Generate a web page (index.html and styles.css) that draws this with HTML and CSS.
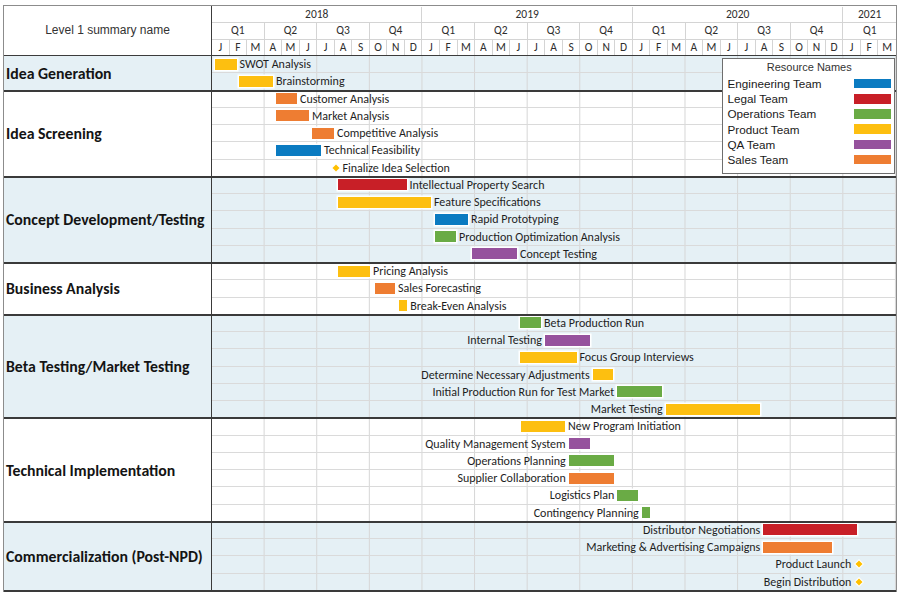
FILE: index.html
```html
<!DOCTYPE html>
<html>
<head>
<meta charset="utf-8">
<title>Gantt</title>
<link rel="stylesheet" href="styles.css">
</head>
<body>
<div class="chart">
  <div class="head">
    <div class="head-title">Level 1 summary name</div>
    <div class="scale">
      <div class="scale-row years">
        <div class="c y12">2018</div><div class="c y12">2019</div><div class="c y12">2020</div><div class="c y3">2021</div>
      </div>
      <div class="scale-row quarters">
        <div class="c q">Q1</div><div class="c q">Q2</div><div class="c q">Q3</div><div class="c q">Q4</div>
        <div class="c q">Q1</div><div class="c q">Q2</div><div class="c q">Q3</div><div class="c q">Q4</div>
        <div class="c q">Q1</div><div class="c q">Q2</div><div class="c q">Q3</div><div class="c q">Q4</div>
        <div class="c q">Q1</div>
      </div>
      <div class="scale-row months">
        <div class="c">J</div><div class="c">F</div><div class="c">M</div><div class="c">A</div><div class="c">M</div><div class="c">J</div><div class="c">J</div><div class="c">A</div><div class="c">S</div><div class="c">O</div><div class="c">N</div><div class="c">D</div>
        <div class="c">J</div><div class="c">F</div><div class="c">M</div><div class="c">A</div><div class="c">M</div><div class="c">J</div><div class="c">J</div><div class="c">A</div><div class="c">S</div><div class="c">O</div><div class="c">N</div><div class="c">D</div>
        <div class="c">J</div><div class="c">F</div><div class="c">M</div><div class="c">A</div><div class="c">M</div><div class="c">J</div><div class="c">J</div><div class="c">A</div><div class="c">S</div><div class="c">O</div><div class="c">N</div><div class="c">D</div>
        <div class="c">J</div><div class="c">F</div><div class="c">M</div>
      </div>
    </div>
  </div>

  <div class="section shade">
    <div class="sec-label">Idea Generation</div>
    <div class="rows">
      <div class="row"><span class="bar product" style="left:2.5px;width:22px"><span class="lbl r">SWOT Analysis</span></span></div>
      <div class="row"><span class="bar product" style="left:27px;width:34px"><span class="lbl r">Brainstorming</span></span></div>
    </div>
  </div>

  <div class="section">
    <div class="sec-label">Idea Screening</div>
    <div class="rows">
      <div class="row"><span class="bar sales" style="left:64px;width:21px"><span class="lbl r">Customer Analysis</span></span></div>
      <div class="row"><span class="bar sales" style="left:64px;width:33px"><span class="lbl r">Market Analysis</span></span></div>
      <div class="row"><span class="bar sales" style="left:100px;width:22px"><span class="lbl r">Competitive Analysis</span></span></div>
      <div class="row"><span class="bar eng" style="left:64px;width:45px"><span class="lbl r">Technical Feasibility</span></span></div>
      <div class="row"><span class="mile" style="left:123.5px"><span class="dia"></span><span class="lbl r">Finalize Idea Selection</span></span></div>
    </div>
  </div>

  <div class="section shade">
    <div class="sec-label">Concept Development/Testing</div>
    <div class="rows">
      <div class="row"><span class="bar legal" style="left:126px;width:68.5px"><span class="lbl r">Intellectual Property Search</span></span></div>
      <div class="row"><span class="bar product" style="left:126px;width:93px"><span class="lbl r">Feature Specifications</span></span></div>
      <div class="row"><span class="bar eng" style="left:223px;width:33px"><span class="lbl r">Rapid Prototyping</span></span></div>
      <div class="row"><span class="bar ops" style="left:223px;width:21px"><span class="lbl r">Production Optimization Analysis</span></span></div>
      <div class="row"><span class="bar qa" style="left:260px;width:45px"><span class="lbl r">Concept Testing</span></span></div>
    </div>
  </div>

  <div class="section">
    <div class="sec-label">Business Analysis</div>
    <div class="rows">
      <div class="row"><span class="bar product" style="left:126px;width:32px"><span class="lbl r">Pricing Analysis</span></span></div>
      <div class="row"><span class="bar sales" style="left:163px;width:20px"><span class="lbl r">Sales Forecasting</span></span></div>
      <div class="row"><span class="bar product" style="left:187.3px;width:8px"><span class="lbl r">Break-Even Analysis</span></span></div>
    </div>
  </div>

  <div class="section shade">
    <div class="sec-label">Beta Testing/Market Testing</div>
    <div class="rows">
      <div class="row"><span class="bar ops" style="left:308px;width:21px"><span class="lbl r">Beta Production Run</span></span></div>
      <div class="row"><span class="bar qa" style="left:333px;width:44.5px"><span class="lbl l">Internal Testing</span></span></div>
      <div class="row"><span class="bar product" style="left:308px;width:56.5px"><span class="lbl r">Focus Group Interviews</span></span></div>
      <div class="row"><span class="bar product" style="left:380.7px;width:20.5px"><span class="lbl l">Determine Necessary Adjustments</span></span></div>
      <div class="row"><span class="bar ops" style="left:405.3px;width:45px"><span class="lbl l">Initial Production Run for Test Market</span></span></div>
      <div class="row"><span class="bar product" style="left:453.7px;width:94.3px"><span class="lbl l">Market Testing</span></span></div>
    </div>
  </div>

  <div class="section">
    <div class="sec-label">Technical Implementation</div>
    <div class="rows">
      <div class="row"><span class="bar product" style="left:308.5px;width:44.5px"><span class="lbl r">New Program Initiation</span></span></div>
      <div class="row"><span class="bar qa" style="left:356.7px;width:21px"><span class="lbl l">Quality Management System</span></span></div>
      <div class="row"><span class="bar ops" style="left:356.7px;width:45px"><span class="lbl l">Operations Planning</span></span></div>
      <div class="row"><span class="bar sales" style="left:356.7px;width:45px"><span class="lbl l">Supplier Collaboration</span></span></div>
      <div class="row"><span class="bar ops" style="left:405.3px;width:20.7px"><span class="lbl l">Logistics Plan</span></span></div>
      <div class="row"><span class="bar ops" style="left:429.7px;width:8.3px"><span class="lbl l">Contingency Planning</span></span></div>
    </div>
  </div>

  <div class="section shade">
    <div class="sec-label">Commercialization (Post-NPD)</div>
    <div class="rows">
      <div class="row"><span class="bar legal" style="left:551.3px;width:93.7px"><span class="lbl l">Distributor Negotiations</span></span></div>
      <div class="row"><span class="bar sales" style="left:551.3px;width:69px"><span class="lbl l">Marketing &amp; Advertising Campaigns</span></span></div>
      <div class="row"><span class="mile" style="left:647.3px"><span class="dia"></span><span class="lbl l">Product Launch</span></span></div>
      <div class="row"><span class="mile" style="left:647.3px"><span class="dia"></span><span class="lbl l">Begin Distribution</span></span></div>
    </div>
  </div>

  <div class="legend">
    <div class="lg-title">Resource Names</div>
    <div class="lg-row"><span>Engineering Team</span><span class="sw eng"></span></div>
    <div class="lg-row"><span>Legal Team</span><span class="sw legal"></span></div>
    <div class="lg-row"><span>Operations Team</span><span class="sw ops"></span></div>
    <div class="lg-row"><span>Product Team</span><span class="sw product"></span></div>
    <div class="lg-row"><span>QA Team</span><span class="sw qa"></span></div>
    <div class="lg-row"><span>Sales Team</span><span class="sw sales"></span></div>
  </div>
</div>
</body>
</html>
```

FILE: styles.css
```css
* { box-sizing: border-box; }

body {
  margin: 0;
  background: #ffffff;
}

.chart {
  position: relative;
  margin: 5px 0 0 3px;
  width: 894px;
  border: 1px solid #8c8c8c;
  font-family: Carlito, Lato, "Liberation Sans", sans-serif;
  color: #262626;
  background: #ffffff;
}

/* ---------- header ---------- */
.head {
  display: flex;
  border-bottom: 1px solid #3c3c3c;
}

.head-title {
  width: 208px;
  border-right: 1px solid #3c3c3c;
  display: flex;
  align-items: center;
  justify-content: center;
  padding-bottom: 2px;
  font-family: "Liberation Sans", Arial, sans-serif;
  font-size: 12px;
  color: #333333;
}

.scale {
  flex: 1;
}

.scale-row {
  display: grid;
  grid-template-columns: repeat(39, 1fr);
}

.scale-row .c {
  display: flex;
  align-items: center;
  justify-content: center;
  border-right: 1px solid #d4d4d4;
  font-size: 11.5px;
  line-height: 1;
  color: #2e2e2e;
}

.scale-row .c:last-child {
  border-right: none;
}

.years {
  height: 16.5px;
  border-bottom: 1px solid #d4d4d4;
  padding-top: 1px;
}

.quarters {
  height: 17px;
  border-bottom: 1px solid #d4d4d4;
}

.months {
  height: 15.5px;
}

.y12 { grid-column: span 12; }
.y3 { grid-column: span 3; }
.q { grid-column: span 3; }

/* ---------- body sections ---------- */
.section {
  position: relative;
  display: flex;
}

.section.shade {
  background: #e5f0f5;
}

.section::after {
  content: "";
  position: absolute;
  left: 0;
  right: 0;
  bottom: -1px;
  height: 2px;
  background: #3a3a3a;
  z-index: 3;
}

.section:last-of-type::after {
  display: none;
}

.sec-label {
  width: 208px;
  border-right: 1px solid #3a3a3a;
  display: flex;
  align-items: center;
  padding-left: 2px;
  font-weight: 700;
  font-size: 15.8px;
  color: #141414;
  white-space: nowrap;
}

.rows {
  flex: 1;
  background-image: linear-gradient(to left, #d6d6d6 1px, transparent 1px);
  background-size: calc(100% / 13) 100%;
  background-repeat: repeat-x;
}

.row {
  position: relative;
  height: 17.25px;
  border-bottom: 1px solid #dadada;
}

.section:last-of-type .row:last-child {
  border-bottom: none;
}

/* ---------- bars ---------- */
.bar {
  position: absolute;
  top: 2.5px;
  height: 11px;
  box-shadow: 0 0 0 1.5px #ffffff;
}

.lbl {
  position: absolute;
  top: 50%;
  transform: translateY(-50%);
  white-space: nowrap;
  font-size: 12px;
  line-height: 1;
  color: #1e1e1e;
}

.lbl.r {
  left: 100%;
  margin-left: 3px;
}

.lbl.l {
  right: 100%;
  margin-right: 3px;
}

.mile {
  position: absolute;
  top: 0;
  bottom: 0;
  width: 0;
}

.dia {
  position: absolute;
  left: 0;
  top: 50%;
  width: 5px;
  height: 5px;
  background: #ffc000;
  box-shadow: 0 0 0 1px #ffffff;
  transform: translate(-50%, -50%) rotate(45deg);
}

.mile .lbl.r {
  left: 0;
  margin-left: 7px;
}

.mile .lbl.l {
  right: 0;
  margin-right: 8px;
}

.eng { background: #0b7bc1; }
.legal { background: #c81f27; }
.ops { background: #6aab45; }
.product { background: #fdbf10; }
.qa { background: #96529d; }
.sales { background: #ee7d32; }

/* ---------- legend ---------- */
.legend {
  position: absolute;
  left: 718px;
  top: 51.5px;
  width: 172.5px;
  height: 116px;
  border: 1px solid #6e6e6e;
  background: #ffffff;
  padding: 1.5px 2.5px 0 4.5px;
  font-family: "Liberation Sans", Arial, sans-serif;
  z-index: 5;
}

.lg-title {
  text-align: center;
  font-size: 11px;
  line-height: 15px;
  color: #333333;
  margin-bottom: 1px;
}

.lg-row {
  display: flex;
  justify-content: space-between;
  align-items: center;
  height: 15.2px;
  font-size: 11.7px;
  color: #1a1a1a;
}

.sw {
  width: 37px;
  height: 9.5px;
}
```
